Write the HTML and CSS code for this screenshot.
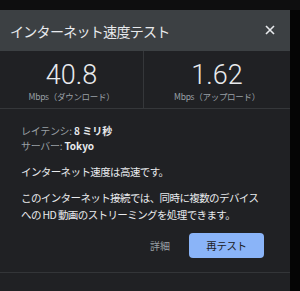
FILE: index.html
```html
<!DOCTYPE html>
<html lang="ja">
<head>
<meta charset="utf-8">
<link rel="stylesheet" href="styles.css">
</head>
<body>
<div class="page">
  <div class="dialog">
    <div class="header">
      <span class="title">インターネット速度テスト</span>
      <svg class="close" width="10" height="10" viewBox="0 0 10 10"><path d="M1 1L9 9M9 1L1 9" stroke="#e8eaed" stroke-width="1.6" fill="none"/></svg>
    </div>
    <div class="stats">
      <div class="stat">
        <div class="num">40.8</div>
        <div class="unit">Mbps（ダウンロード）</div>
      </div>
      <div class="stat">
        <div class="num">1.62</div>
        <div class="unit">Mbps（アップロード）</div>
      </div>
    </div>
    <div class="content">
      <div class="meta"><span class="key">レイテンシ:</span> <span class="val">8 ミリ秒</span></div>
      <div class="meta"><span class="key">サーバー:</span> <span class="val">Tokyo</span></div>
      <p class="msg">インターネット速度は高速です。</p>
      <p class="msg para">このインターネット接続では、同時に複数のデバイスへの HD 動画のストリーミングを処理できます。</p>
      <div class="actions">
        <span class="details">詳細</span>
        <span class="retest">再テスト</span>
      </div>
    </div>
    <div class="footer"></div>
  </div>
  <div class="side"></div>
</div>
</body>
</html>
```
FILE: styles.css
```css
html, body {
  margin: 0;
  padding: 0;
  background: #0e0e0f;
  width: 300px;
  height: 291px;
  overflow: hidden;
  font-family: "Noto Sans CJK JP", "Noto Sans", sans-serif;
}
.page {
  display: flex;
  padding-top: 10px;
}
.dialog {
  width: 290px;
  height: 281px;
  background: #202124;
  display: flex;
  flex-direction: column;
}
.side {
  flex: 1;
  background: #050505;
}
.header {
  height: 41px;
  background: #3c4043;
  display: flex;
  align-items: center;
  justify-content: space-between;
  padding: 0 15px 0 10px;
}
.title {
  color: #e8eaed;
  font-size: 14px;
  letter-spacing: -0.7px;
}
.close {
  margin-top: -2px;
}
.stats {
  display: grid;
  grid-template-columns: 144px 1fr;
  height: 57px;
  border-bottom: 1px solid #35373a;
}
.stat {
  display: flex;
  flex-direction: column;
  align-items: center;
  padding-top: 11px;
}
.stat:first-child {
  border-right: 1px solid #35373a;
}
.num {
  font-family: Roboto, "Liberation Sans", sans-serif;
  font-weight: 300;
  font-size: 27px;
  line-height: 26px;
  color: #e8eaed;
}
.unit {
  font-size: 8.5px;
  line-height: 10px;
  margin-top: 3px;
  color: #9aa0a6;
  letter-spacing: -0.3px;
}
.content {
  padding: 14px 0 0 21px;
  height: 164px;
  box-sizing: border-box;
  border-bottom: 1px solid #333538;
}
.meta {
  font-size: 10px;
  line-height: 15px;
}
.key { color: #9aa0a6; letter-spacing: -0.3px; }
.val { color: #e8eaed; font-weight: 700; }
.msg {
  margin: 10px 0 0;
  font-size: 10.5px;
  line-height: 17px;
  color: #e8eaed;
  letter-spacing: -0.6px;
  width: 247px;
}
.para {
  margin-top: 9px;
}
.actions {
  display: flex;
  justify-content: flex-end;
  align-items: center;
  margin: 10px 26px 0 0;
}
.details {
  color: #9aa0a6;
  font-size: 10px;
  margin-right: 19px;
}
.retest {
  width: 75px;
  height: 25px;
  background: #8ab4f8;
  border-radius: 4px;
  color: #202124;
  font-size: 10.5px;
  display: flex;
  align-items: center;
  justify-content: center;
  letter-spacing: -0.4px;
}
.footer {
  flex: 1;
}
```
